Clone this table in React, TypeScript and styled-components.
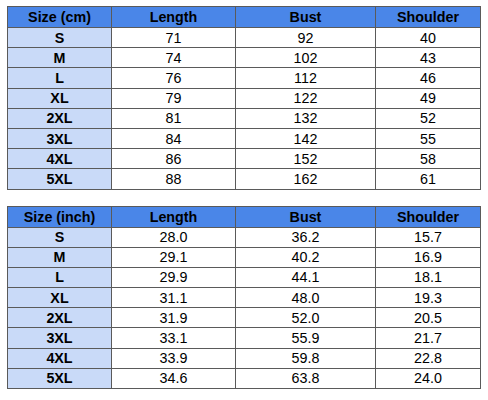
import React from "react";
import styled, { createGlobalStyle } from "styled-components";

const GlobalStyle = createGlobalStyle`
  html, body {
    margin: 0;
    padding: 0;
    background: #ffffff;
    font-family: "Liberation Sans", Arial, sans-serif;
  }
`;

const Page = styled.div`
  display: flex;
  flex-direction: column;
  gap: 16px;
  padding: 6px 0 0 7px;
`;

const Table = styled.table`
  border-collapse: collapse;
  table-layout: fixed;
  width: 474px;
  color: #000;
`;

const HeadCell = styled.th`
  background: #4a86e8;
  border: 1px solid #5a5a5a;
  height: 20px;
  padding: 0;
  font-size: 14.3px;
  font-weight: bold;
  text-align: center;
`;

const Cell = styled.td<{ $size?: boolean }>`
  background: ${(p) => (p.$size ? "#c9daf8" : "#ffffff")};
  border: 1px solid #5a5a5a;
  height: 19.2px;
  padding: 0;
  font-size: 14.3px;
  font-weight: ${(p) => (p.$size ? "bold" : "normal")};
  text-align: center;
`;

const widths = [104, 124, 140, 105];

const cm = [
  ["S", "71", "92", "40"],
  ["M", "74", "102", "43"],
  ["L", "76", "112", "46"],
  ["XL", "79", "122", "49"],
  ["2XL", "81", "132", "52"],
  ["3XL", "84", "142", "55"],
  ["4XL", "86", "152", "58"],
  ["5XL", "88", "162", "61"],
];

const inch = [
  ["S", "28.0", "36.2", "15.7"],
  ["M", "29.1", "40.2", "16.9"],
  ["L", "29.9", "44.1", "18.1"],
  ["XL", "31.1", "48.0", "19.3"],
  ["2XL", "31.9", "52.0", "20.5"],
  ["3XL", "33.1", "55.9", "21.7"],
  ["4XL", "33.9", "59.8", "22.8"],
  ["5XL", "34.6", "63.8", "24.0"],
];

function SizeTable({ unit, rows }: { unit: string; rows: string[][] }) {
  return (
    <Table>
      <colgroup>
        {widths.map((w, i) => (
          <col key={i} style={{ width: w }} />
        ))}
      </colgroup>
      <thead>
        <tr>
          <HeadCell>Size ({unit})</HeadCell>
          <HeadCell>Length</HeadCell>
          <HeadCell>Bust</HeadCell>
          <HeadCell>Shoulder</HeadCell>
        </tr>
      </thead>
      <tbody>
        {rows.map((r) => (
          <tr key={r[0]}>
            <Cell $size>{r[0]}</Cell>
            <Cell>{r[1]}</Cell>
            <Cell>{r[2]}</Cell>
            <Cell>{r[3]}</Cell>
          </tr>
        ))}
      </tbody>
    </Table>
  );
}

export default function App() {
  return (
    <>
      <GlobalStyle />
      <Page>
        <SizeTable unit="cm" rows={cm} />
        <SizeTable unit="inch" rows={inch} />
      </Page>
    </>
  );
}
